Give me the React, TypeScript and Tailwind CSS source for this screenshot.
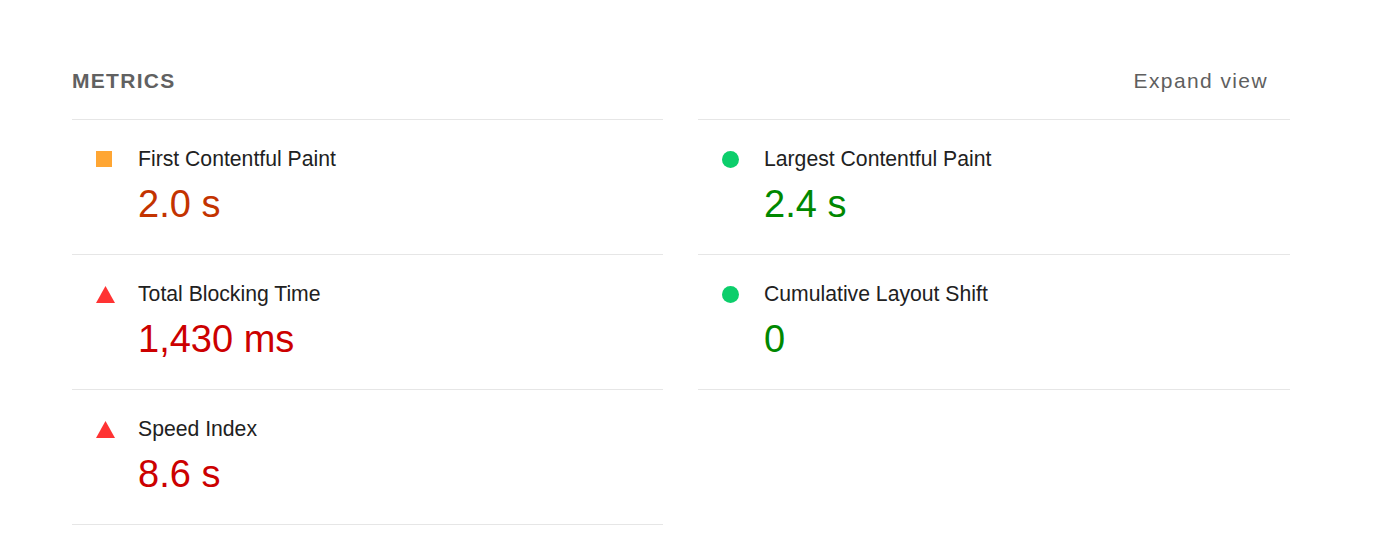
import React from "react";

type Rating = "pass" | "average" | "fail";

const metrics: { title: string; value: string; rating: Rating }[] = [
    { title: "First Contentful Paint", value: "2.0 s", rating: "average" },
    { title: "Largest Contentful Paint", value: "2.4 s", rating: "pass" },
    { title: "Total Blocking Time", value: "1,430 ms", rating: "fail" },
    { title: "Cumulative Layout Shift", value: "0", rating: "pass" },
    { title: "Speed Index", value: "8.6 s", rating: "fail" },
];

const valueColor: Record<Rating, string> = {
    pass: "text-[#008800]",
    average: "text-[#c33300]",
    fail: "text-[#cc0000]",
};

const RatingIcon = ({ rating }: { rating: Rating }) => {
    if (rating === "pass") {
        return <span className="block w-[17px] h-[17px] rounded-full bg-[#0cce6b]" />;
    }
    if (rating === "average") {
        return <span className="block w-[16px] h-[16px] bg-[#ffa633]" />;
    }
    return (
        <svg width="19" height="17" viewBox="0 0 19 17" className="block">
            <polygon points="9.5,0 19,17 0,17" fill="#ff3333" />
        </svg>
    );
};

const Metric = ({ title, value, rating, last }: { title: string; value: string; rating: Rating; last: boolean }) => (
    <div className={`border-t border-[#e6e6e6] pl-[24px] pt-[27px] pb-[28px] ${last ? "border-b" : ""}`}>
        <div className="flex items-center h-[24px]">
            <div className="w-[42px] flex items-center">
                <RatingIcon rating={rating} />
            </div>
            <span className="text-[21.2px] leading-[24px] text-[#212121]">{title}</span>
        </div>
        <div className={`pl-[42px] mt-[11px] text-[38px] leading-[44px] ${valueColor[rating]}`}>{value}</div>
    </div>
);

export default function App() {
    const left = metrics.filter((_, i) => i % 2 === 0);
    const right = metrics.filter((_, i) => i % 2 === 1);
    return (
        <div className="min-h-[549px] bg-white pt-[69px] pl-[72px] font-['Liberation_Sans',Arial,sans-serif]">
            <div className="w-[1218px]">
                <div className="flex items-center justify-between mb-[26px] h-[24px]">
                    <span className="text-[21px] leading-[24px] font-bold tracking-[1.3px] text-[#616161]">METRICS</span>
                    <span className="text-[21px] leading-[24px] tracking-[1.4px] text-[#5f5f5f] mr-[22px]">Expand view</span>
                </div>
                <div className="grid grid-cols-[591px_592px] gap-x-[35px] items-start">
                    <div>
                        {left.map((m, i) => (
                            <Metric key={m.title} {...m} last={i === left.length - 1} />
                        ))}
                    </div>
                    <div>
                        {right.map((m, i) => (
                            <Metric key={m.title} {...m} last={i === right.length - 1} />
                        ))}
                    </div>
                </div>
            </div>
        </div>
    );
}
